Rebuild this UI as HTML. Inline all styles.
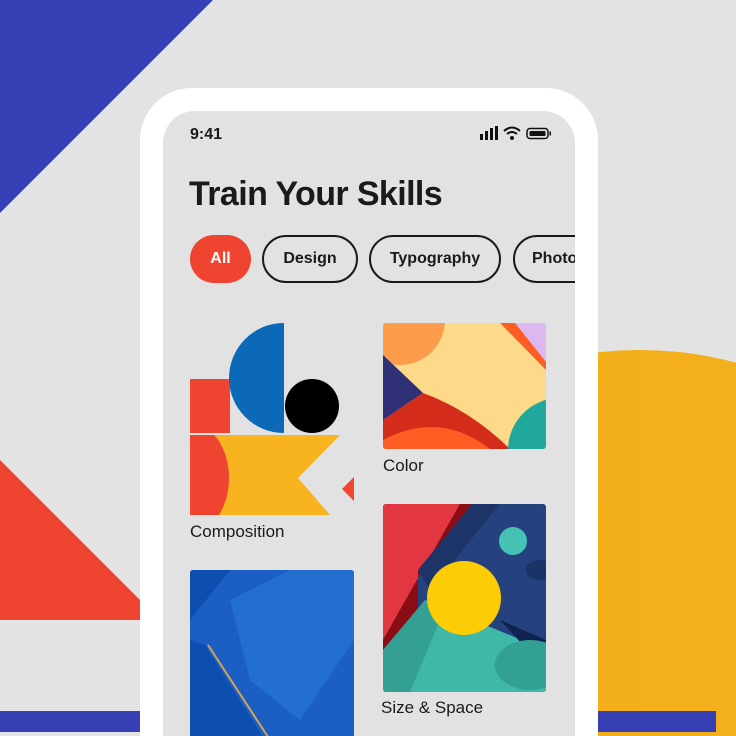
<!DOCTYPE html>
<html><head><meta charset="utf-8"><style>
*{margin:0;padding:0}
html,body{width:736px;height:736px;overflow:hidden}
body{background:#e3e3e3;font-family:"Liberation Sans",sans-serif;position:relative}
.t{position:absolute;color:#1a1a1a;font-weight:bold}
.chip{position:absolute;top:235px;height:44px;border:2px solid #1a1a1a;border-radius:24px;font-size:16px;font-weight:bold;line-height:44px;text-align:center;color:#1a1a1a;box-sizing:content-box}
</style></head><body>
<svg width="736" height="736" style="position:absolute;left:0;top:0">
<defs>
<linearGradient id="yg" x1="0" x2="1"><stop offset="0" stop-color="#d9980c"/><stop offset="0.35" stop-color="#f2ae1a"/><stop offset="1" stop-color="#f5b41e"/></linearGradient>
<clipPath id="scr"><rect x="163" y="111" width="412" height="700" rx="32"/></clipPath>
<clipPath id="c1"><rect x="383" y="323" width="163" height="126" rx="3"/></clipPath>
<clipPath id="c2"><rect x="383" y="504" width="163" height="188" rx="3"/></clipPath>
<clipPath id="c3"><rect x="190" y="570" width="164" height="180" rx="3"/></clipPath>
<clipPath id="c4"><rect x="190" y="435" width="94" height="80"/></clipPath>
</defs>
<polygon points="0,0 213,0 0,213" fill="#3640b4"/>
<polygon points="0,460 140,600 140,620 0,620" fill="#ee4430"/>
<circle cx="640" cy="720" r="370" fill="url(#yg)"/>
<rect x="0" y="711" width="140" height="21" fill="#3640b4"/>
<rect x="598" y="711" width="118" height="21" fill="#3640b4"/>
<rect x="140" y="88" width="458" height="760" rx="52" fill="#fff"/>
<rect x="163" y="111" width="412" height="700" rx="32" fill="#e2e2e2"/>
<g clip-path="url(#scr)">
<rect x="190" y="379" width="40" height="54" fill="#ee4430"/>
<path d="M284,323 V433 A55,55 0 0 1 284,323Z" fill="#0b69b8"/>
<circle cx="312" cy="406" r="27" fill="#000"/>
<g clip-path="url(#c4)">
<rect x="190" y="435" width="94" height="80" fill="#f8b41e"/>
<path d="M190,435 H214 Q196,445 196,475 V515 H190Z" fill="#e2e2e2"/>
<ellipse cx="190" cy="478" rx="39" ry="55" fill="#ee4430"/>
</g>
<path d="M284,435 H340 L298,478 L330,515 H284Z" fill="#f8b41e"/>
<polygon points="354,477 354,501 342,489" fill="#ee4430"/>
<g clip-path="url(#c1)">
<rect x="383" y="323" width="163" height="126" fill="#fdd98a"/>
<circle cx="400" cy="320" r="45" fill="#fd9c4a"/>
<polygon points="383,355 423,393 383,420" fill="#303077"/>
<path d="M383,420 L423,393 Q470,410 510,449 H383Z" fill="#d42c1a"/>
<path d="M383,440 Q440,410 490,449 H383Z" fill="#fd5c22"/>
<circle cx="560" cy="450" r="52" fill="#20a89c"/>
<polygon points="500,323 530,323 546,350 546,370" fill="#fd5c22"/>
<polygon points="515,323 546,323 546,362" fill="#dcb8f0"/>
</g>
<g clip-path="url(#c2)">
<rect x="383" y="504" width="163" height="188" fill="#25427f"/>
<polygon points="383,504 460,504 383,640" fill="#e23640"/>
<polygon points="460,504 472,504 418,570 418,610 383,650 383,640" fill="#8a0c14"/>
<polygon points="418,570 472,504 500,504 430,590" fill="#1c3468"/>
<polygon points="383,650 425,600 546,650 546,692 383,692" fill="#3fb8a8"/>
<polygon points="383,650 425,600 440,620 410,692 383,692" fill="#34a094"/>
<polygon points="500,620 546,640 546,670" fill="#0e2350"/>
<circle cx="513" cy="541" r="14" fill="#46c2b5"/>
<ellipse cx="540" cy="570" rx="14" ry="10" fill="#1a3368"/>
<ellipse cx="530" cy="665" rx="35" ry="25" fill="#32a092"/>
<circle cx="464" cy="598" r="37" fill="#fccd06"/>
</g>
<g clip-path="url(#c3)">
<rect x="190" y="570" width="164" height="180" fill="#1b5fc4"/>
<polygon points="190,570 230,570 190,620" fill="#0d4fb0"/>
<polygon points="230,600 290,570 354,570 354,640 300,720 250,680" fill="#236fd0"/>
<line x1="208" y1="645" x2="270" y2="740" stroke="#d9a050" stroke-width="2"/>
<polygon points="190,640 205,645 265,740 190,740" fill="#0d4fb0"/>
</g>
</g>
<rect x="480" y="134" width="3" height="6" fill="#111"/>
<rect x="485" y="131" width="3" height="9" fill="#111"/>
<rect x="490" y="128" width="3" height="12" fill="#111"/>
<rect x="495" y="126" width="3" height="14" fill="#111"/>
<path d="M504,131 Q512,124 520,131 M507,134 Q512,130 517,134" stroke="#111" stroke-width="2" fill="none"/>
<circle cx="512" cy="138" r="2" fill="#111"/>
<rect x="527" y="128.5" width="21" height="10" rx="3" fill="none" stroke="#111" stroke-width="1.5"/>
<rect x="529.5" y="131" width="16" height="5" rx="1" fill="#111"/>
<rect x="549.5" y="131.5" width="1.5" height="4" fill="#111"/>
</svg>
<div class="t" style="left:190px;top:126px;font-size:16px">9:41</div>
<div class="t" style="left:189px;top:175px;font-size:34px;letter-spacing:-0.6px">Train Your Skills</div>
<div class="chip" style="left:190px;width:61px;height:48px;line-height:48px;border:none;background:#ee4430;color:#fff">All</div>
<div class="chip" style="left:262px;width:92px">Design</div>
<div class="chip" style="left:369px;width:128px">Typography</div>
<div style="position:absolute;left:163px;top:230px;width:412px;height:60px;overflow:hidden;pointer-events:none">
<div class="chip" style="left:350px;top:5px;width:100px;text-align:left;padding-left:17px">Photography</div></div>
<div class="t" style="left:190px;top:522px;font-size:17px;font-weight:normal">Composition</div>
<div class="t" style="left:383px;top:456px;font-size:17px;font-weight:normal">Color</div>
<div class="t" style="left:381px;top:698px;font-size:17px;font-weight:normal">Size &amp; Space</div>
</body></html>
